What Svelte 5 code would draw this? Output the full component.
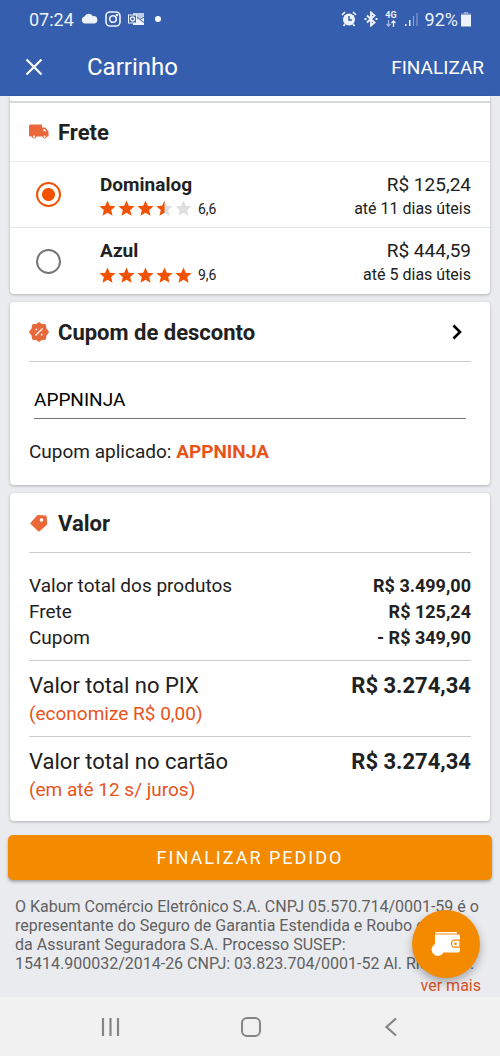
<script lang="ts">
	type Carrier = { id: string; name: string; rating: number; price: string; deadline: string };

	const carriers: Carrier[] = [
		{ id: 'dominalog', name: 'Dominalog', rating: 6.6, price: 'R$ 125,24', deadline: 'até 11 dias úteis' },
		{ id: 'azul', name: 'Azul', rating: 9.6, price: 'R$ 444,59', deadline: 'até 5 dias úteis' }
	];

	const costs = [
		{ label: 'Valor total dos produtos', value: 'R$ 3.499,00' },
		{ label: 'Frete', value: 'R$ 125,24' },
		{ label: 'Cupom', value: '- R$ 349,90' }
	];

	const totals = [
		{ label: 'Valor total no PIX', note: '(economize R$ 0,00)', value: 'R$ 3.274,34' },
		{ label: 'Valor total no cartão', note: '(em até 12 s/ juros)', value: 'R$ 3.274,34' }
	];

	let selected = $state('dominalog');
	let coupon = $state('APPNINJA');
	const applied = 'APPNINJA';

	// ratings go from 0 to 10, stars are drawn in halves
	function starFill(rating: number, index: number): string {
		const stars = Math.round(rating) / 2;
		if (stars >= index + 1) return 'full';
		return stars > index ? 'half' : 'none';
	}

	function formatRating(rating: number): string {
		return rating.toFixed(1).replace('.', ',');
	}
</script>

<div class="app">
	<header>
		<div class="status">
			<span class="time">07:24</span>
			<svg class="cloud" width="17" height="12" viewBox="0 0 17 12"><path d="M4 10.500a3.500 3.500 0 0 1-.4-6.900A4.600 4.600 0 0 1 12 3.200a3.600 3.600 0 0 1 1.300 7.300z" fill="currentColor" /></svg>
			<svg width="16" height="16" viewBox="0 0 16 16" fill="none" stroke="currentColor" stroke-width="1.600">
				<rect x="1" y="1" width="14" height="14" rx="4" />
				<circle cx="8" cy="8" r="3.300" />
				<circle cx="12" cy="4" r=".5" />
			</svg>
			<svg width="17" height="14" viewBox="0 0 17 14">
				<path d="M5 1h11v12H5z" fill="currentColor" opacity=".75" />
				<path d="M9 8l7-4v9H5v-2h4z" fill="currentColor" />
				<path d="M9 5l3 2.500L16 5M12 7.500l4 3" stroke="#355eae" fill="none" />
				<rect x=".5" y="3" width="8" height="8" fill="#355eae" stroke="currentColor" />
				<circle cx="4.500" cy="7" r="2" fill="none" stroke="currentColor" stroke-width="1.300" />
			</svg>
			<span class="dot"></span>
			<span class="spacer"></span>
			<svg width="16" height="16" viewBox="0 0 16 16">
				<circle cx="8" cy="8.500" r="6" fill="currentColor" />
				<path d="M8 5v4h3" fill="none" stroke="#355eae" stroke-width="1.500" />
				<path d="M1 4l3-3M15 4l-3-3M4 13l-1.500 2M12 13l1.500 2" stroke="currentColor" stroke-width="1.700" />
			</svg>
			<svg width="14" height="16" viewBox="0 0 14 16" fill="none" stroke="currentColor" stroke-width="1.900">
				<path d="M3 4.500l7.500 7L7 14.500v-13l3.500 3L3 11.500" />
				<path d="M.5 8h2M11.500 8h2" />
			</svg>
			<span class="network">
				<span>4G</span>
				<svg width="10" height="7" viewBox="0 0 10 7" fill="none" stroke="currentColor" stroke-width="1.300">
					<path d="M2.500 0v6M.5 4l2 2 2-2" opacity=".6" />
					<path d="M7.500 7V1M5.500 3l2-2 2 2" />
				</svg>
			</span>
			<svg width="14" height="15" viewBox="0 0 14 15" fill="currentColor">
				<path d="M1 12h1.500v2H1zM5 8h1.500v6H5z" />
				<path d="M9 4h1v10H9zM12.500 1h1v13h-1z" opacity=".5" />
			</svg>
			<span class="level">92%</span>
			<svg width="10" height="15" viewBox="0 0 10 15" fill="currentColor">
				<path d="M3 0h4v1.500h3V4H0V1.500h3z" opacity=".5" />
				<path d="M0 3h10v11.500H0z" />
			</svg>
		</div>
		<div class="toolbar">
			<button type="button" class="close" aria-label="Fechar">
				<svg width="18" height="18" viewBox="0 0 18 18"><path d="M1.500 1.500l15 15M16.500 1.500l-15 15" stroke="currentColor" stroke-width="2.200" /></svg>
			</button>
			<h1>Carrinho</h1>
			<button type="button" class="finish">FINALIZAR</button>
		</div>
	</header>

	<main>
		<section class="card shipping">
			<div class="title">
				<svg width="20" height="20" viewBox="0 0 20 20">
					<path d="M1.500 2.500H13v3h3.300L19.500 9.500v5H18a2.400 2.400 0 0 1-4.700 0H7.500a2.400 2.400 0 0 1-4.700 0H1.500A1.500 1.500 0 0 1 0 13V4a1.500 1.500 0 0 1 1.500-1.500z" fill="#ea6739" />
					<path d="M14.500 7h1.200l1.800 2.200h-3z" fill="#fff" />
					<circle cx="5.100" cy="14.600" r="1.100" fill="#fff" />
					<circle cx="15.600" cy="14.600" r="1.100" fill="#fff" />
				</svg>
				<h2>Frete</h2>
			</div>
			{#each carriers as carrier}
				<label class="carrier">
					<input type="radio" name="carrier" value={carrier.id} bind:group={selected} />
					<span class="who">
						<strong>{carrier.name}</strong>
						<span class="rating">
							{#each [0, 1, 2, 3, 4] as i}
								<svg width="17" height="17" viewBox="1.500 1.500 21 21">
									<path class="star" class:full={starFill(carrier.rating, i) === 'full'} d="M12 17.270L18.180 21l-1.640-7.030L22 9.240l-7.190-.610L12 2 9.190 8.630 2 9.240l5.460 4.730L5.820 21z" />
									{#if starFill(carrier.rating, i) === 'half'}
										<path class="star full" d="M12 17.270V2L9.190 8.630 2 9.240l5.460 4.730L5.820 21z" />
									{/if}
								</svg>
							{/each}
							<span class="score">{formatRating(carrier.rating)}</span>
						</span>
					</span>
					<span class="cost">
						<span class="price">{carrier.price}</span>
						<span class="deadline">{carrier.deadline}</span>
					</span>
				</label>
			{/each}
		</section>

		<section class="card coupon">
			<div class="title">
				<svg width="20" height="20" viewBox="0 0 20 20">
					<path d="M10 .5l2.700 2 3.600.2.700 3.700L19.500 10 17 13.600l-.7 3.700-3.600.2-2.700 2-2.700-2-3.600-.2-.7-3.700L.5 10 3 6.400l.7-3.700 3.600-.2z" fill="#ea6739" stroke="#ea6739" stroke-linejoin="round" />
					<path d="M6.500 13.500l7-7" stroke="#fff" stroke-width="1.300" />
					<circle cx="7.300" cy="7.300" r=".9" fill="#fff" />
					<circle cx="12.700" cy="12.700" r=".9" fill="#fff" />
				</svg>
				<h2>Cupom de desconto</h2>
				<button type="button" class="expand" aria-label="Abrir cupom">
					<svg width="10" height="16" viewBox="0 0 10 16"><path d="M1.500 1.500L8 8l-6.500 6.500" fill="none" stroke="#000" stroke-width="2.600" /></svg>
				</button>
			</div>
			<input type="text" aria-label="Cupom" bind:value={coupon} />
			<p>Cupom aplicado: <strong>{applied}</strong></p>
		</section>

		<section class="card summary">
			<div class="title">
				<svg width="20" height="20" viewBox="0 0 20 20">
					<path d="M1.600 9.700L8 2.500q.5-.6 1.200-.6l7.400.5q1 .1 1.100 1l.5 7.600q0 .6-.5 1l-7.100 6.200q-.7.600-1.400 0L1.600 11q-.6-.6 0-1.300z" fill="#ea6739" />
					<circle cx="12.500" cy="7" r="1.800" fill="#fff" />
				</svg>
				<h2>Valor</h2>
			</div>
			<dl class="costs">
				{#each costs as cost}
					<div>
						<dt>{cost.label}</dt>
						<dd>{cost.value}</dd>
					</div>
				{/each}
			</dl>
			{#each totals as total}
				<div class="total">
					<div>
						<span class="label">{total.label}</span>
						<span class="note">{total.note}</span>
					</div>
					<strong>{total.value}</strong>
				</div>
			{/each}
		</section>

		<button type="button" class="order">FINALIZAR PEDIDO</button>

		<footer>
			<!-- word joiner keeps the process number on one line -->
			<p>
				O Kabum Comércio Eletrônico S.A. CNPJ 05.570.714/0001-59 é o representante do Seguro de
				Garantia Estendida e Roubo e Furto da Assurant Seguradora S.A. Processo SUSEP:
				15414.900032/2014-&#8288;26 CNPJ: 03.823.704/0001-52 Al. Rio Neg...
			</p>
			<a href="#mais">ver mais</a>
			<button type="button" class="fab" aria-label="Carteira">
				<svg width="32" height="26" viewBox="0 0 32 26">
					<path d="M5 2.500Q5 1 6.500 1H27v1.500H6z" fill="#fff" />
					<path d="M5 3.500h23.500q1.500 0 1.500 1.500V19.500q0 2-2 2H13.500A6.300 6.300 0 1 1 5 13z" fill="#fff" />
					<path d="M30 9.200h-5a3.500 3.500 0 0 0 0 7h5z" fill="#fff" stroke="#f38a00" stroke-width="1.300" />
					<circle cx="25.500" cy="12.700" r="1.300" fill="#f38a00" />
				</svg>
			</button>
		</footer>
	</main>

	<nav>
		<button type="button" aria-label="Recentes">
			<svg width="20" height="20" viewBox="0 0 20 20"><path d="M2 1v18M9.500 1v18M17 1v18" stroke="currentColor" stroke-width="2.200" /></svg>
		</button>
		<button type="button" aria-label="Início">
			<svg width="20" height="20" viewBox="0 0 20 20"><rect x="1" y="1" width="18" height="18" rx="5" fill="none" stroke="currentColor" stroke-width="2" /></svg>
		</button>
		<button type="button" aria-label="Voltar">
			<svg width="20" height="20" viewBox="0 0 20 20"><path d="M15 1.500L5.500 10l9.500 8.500" fill="none" stroke="currentColor" stroke-width="2.200" /></svg>
		</button>
	</nav>
</div>

<style>
	:global(body) { background: #eaebef; }
	.app { font-family: Roboto, sans-serif; font-size: 19px; color: #212121; display: flex; flex-direction: column; min-height: 100vh; }
	button { padding: 0; border: 0; background: none; color: inherit; font: inherit; cursor: pointer; }
	svg { display: block; flex: none; }
	h1, h2, p, dl, dd { margin: 0; }

	header { background: #355eae; color: #fff; }
	.status { display: flex; align-items: center; height: 38px; padding: 0 29px; gap: 7px; color: #eef2fb; font-size: 18px; }
	.spacer { flex: 1; }
	.dot { width: 6px; height: 6px; margin-left: 3px; border-radius: 50%; background: #fff; }
	.network { display: flex; flex-direction: column; align-items: center; font-size: 9px; font-weight: 700; line-height: 9px; }
	.level { margin-right: -4px; }
	.toolbar { display: flex; align-items: center; height: 58px; padding: 0 16px 0 25px; }
	.close { margin-right: 44px; }
	h1 { flex: 1; font-size: 24px; font-weight: 400; line-height: 32px; }

	main { flex: 1; padding: 0 8px 2px; }
	.card { margin: 0 2px 8px; padding: 0 19px; background: #fff; border-radius: 4px; box-shadow: 0 1px 3px rgba(0, 0, 0, 0.25); }
	.title { display: flex; align-items: center; height: 59px; gap: 9px; border-bottom: 1px solid #ccc; }
	h2 { flex: 1; padding-top: 2px; font-size: 22px; font-weight: 700; line-height: 28px; }

	.shipping { padding: 5px 0 0; border-radius: 0 0 4px 4px; }
	.shipping .title { height: 58px; padding: 0 19px; border-top: 2px solid #d6d9db; border-bottom-color: #e8e8e8; }
	.carrier { display: flex; align-items: center; box-sizing: border-box; height: 66px; padding: 0 19px 0 26px; border-bottom: 1px solid #e4e5e9; }
	.carrier:last-child { border-bottom: 0; }
	input[type='radio'] { appearance: none; width: 25px; height: 25px; margin: 0 39px 0 0; border: 2px solid #757575; border-radius: 50%; }
	input[type='radio']:checked { border-color: #f15200; background: radial-gradient(circle, #f15200 6px, #fff 7px); }
	.who { flex: 1; }
	.who, .cost { display: flex; flex-direction: column; padding-top: 4px; line-height: 24px; }
	.rating { display: flex; align-items: center; gap: 2px; margin-left: -1px; }
	.star { fill: #dedede; }
	.star.full { fill: #f15200; }
	.score { margin-left: 4px; font-size: 14px; }
	.cost { text-align: right; }
	.deadline { font-size: 16px; }

	.coupon { display: flow-root; }
	.expand { padding: 0 9px; }
	input[type='text'] { display: block; box-sizing: border-box; width: calc(100% - 10px); height: 38px; margin: 19px 5px 0; padding: 0; border: 0; border-bottom: 1px solid #757575; background: none; color: #000; font: inherit; outline: none; }
	.coupon p { padding: 20px 0; line-height: 26px; }
	.coupon strong { color: #e8531b; }

	.summary { padding-bottom: 9px; }
	.costs { padding: 20px 0 9px; line-height: 26px; }
	.costs div { display: flex; justify-content: space-between; }
	dd { font-size: 18px; font-weight: 700; }
	.total { display: flex; justify-content: space-between; padding: 11px 0 8px; border-top: 1px solid #ccc; font-size: 22px; line-height: 28px; }
	.total div { display: flex; flex-direction: column; }
	.note { color: #e8531b; font-size: 19px; }

	.order { display: block; width: 100%; height: 45px; margin-top: 14px; border-radius: 5px; background: #f38a00; box-shadow: 0 2px 3px rgba(0, 0, 0, 0.3); color: #fff; font-size: 18px; letter-spacing: 2px; }
	footer { position: relative; padding: 17px 11px 0 7px; font-size: 16px; line-height: 19px; color: #616161; }
	footer a { display: block; margin-top: 3px; color: #d8501e; text-align: right; text-decoration: none; }
	.fab { position: absolute; top: 30px; right: 12px; display: flex; align-items: center; justify-content: center; width: 68px; height: 68px; border-radius: 50%; background: #f38a00; box-shadow: 0 4px 8px rgba(0, 0, 0, 0.3); }

	nav { display: flex; align-items: center; justify-content: space-between; height: 59px; padding: 0 99px 0 101px; background: #f1f1f1; color: #858585; }
</style>
